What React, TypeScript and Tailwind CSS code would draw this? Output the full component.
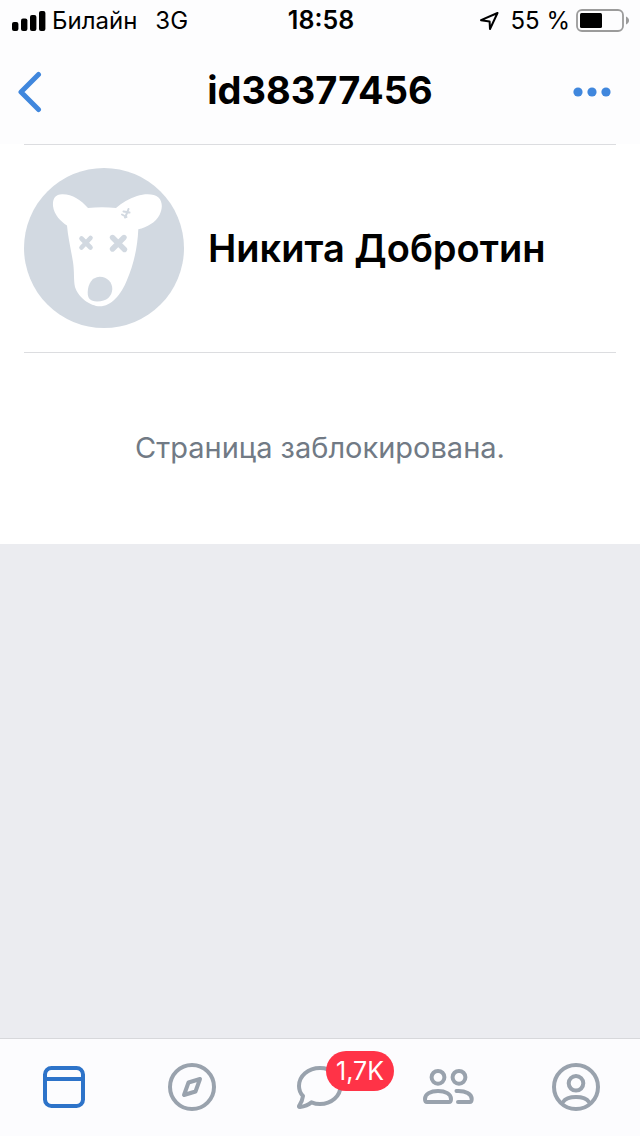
import React from 'react';

const SignalIcon = () => (
  <svg width="34" height="20" viewBox="0 0 34 20" fill="currentColor" aria-hidden="true">
    <rect x="0" y="11" width="6.4" height="9" rx="2" />
    <rect x="9" y="7.5" width="6.4" height="12.5" rx="2" />
    <rect x="18" y="4" width="6.4" height="16" rx="2" />
    <rect x="27" y="0" width="6.4" height="20" rx="2" />
  </svg>
);

const LocationIcon = () => (
  <svg width="20" height="20" viewBox="0 0 20 20" fill="none" stroke="currentColor" strokeWidth="2" strokeLinejoin="round" aria-hidden="true">
    <path d="M18.5 2 2 9.2l8.600 1.200.4 7.600z" />
  </svg>
);

const BatteryIcon = () => (
  <svg width="54" height="24" viewBox="0 0 54 24" aria-hidden="true">
    <rect x="1" y="1" width="46" height="21" rx="5" fill="none" stroke="#9b9b9b" strokeWidth="1.8" />
    <rect x="4" y="4" width="22" height="15" rx="1.5" fill="#000" />
    <path d="M50 7.5c2 1 3 2.300 3 4s-1 3-3 4z" fill="#9b9b9b" />
  </svg>
);

// Собака с крестиками вместо глаз
const DeletedAvatar = () => (
  <svg className="shrink-0" width="160" height="160" viewBox="0 0 160 160" role="img" aria-label="Аватар">
    <circle cx="80" cy="80" r="80" fill="#d2d9e1" />
    <path
      d="M64 40C57 32 48 26 38 26.300C31 26.500 28.500 31 29 38C30 47 37 53.500 43 57.500C44 69 47 82 49 94C50.500 104 49.500 112 51 119C54 129 66 138.300 76 138.300C87 138.300 97 127 103 112C109 98 113.500 81 114.300 61.300C123 59.500 132 54 135.500 47C138.500 41 139 34 134.500 29.500C130 25.500 121 25.500 113 28C105 30.500 98 35 92 40C83 39 73 39 64 40Z"
      fill="#fff"
    />
    <path d="M75.500 108.700C83 108.500 88.500 114.500 88.300 121C88 128 83 133.500 73 133.500C66 133.500 63.500 130 63.700 124C64 116 68 109 75.500 108.700Z" fill="#d2d9e1" />
    <g fill="none" stroke="#d2d9e1" strokeLinecap="round">
      <path d="M57.500 70.500 66.500 79.500M66.500 70 57.500 79.500" strokeWidth="4.600" />
      <path d="M88.500 69.500 100.500 81.500M100 69.500 88.500 81" strokeWidth="5.400" />
      <path d="M104.500 41 103 45 101 49.500M99.500 43.500 105.500 44.500M98 46.500 102.500 49" strokeWidth="2" />
    </g>
  </svg>
);

const FeedIcon = () => (
  <svg width="56" height="56" viewBox="0 0 56 56" fill="none" stroke="currentColor" strokeWidth="4" aria-hidden="true">
    <rect x="9" y="9" width="38" height="38" rx="6.500" />
    <path d="M9 20H47" />
  </svg>
);

const CompassIcon = () => (
  <svg width="56" height="56" viewBox="0 0 56 56" fill="none" stroke="currentColor" strokeWidth="4" strokeLinejoin="round" aria-hidden="true">
    <circle cx="28" cy="28" r="22" />
    <path d="M36 20 24.500 23.500 20 36 31.500 32.500Z" />
  </svg>
);

const ChatIcon = () => (
  <svg width="56" height="56" viewBox="0 0 56 56" fill="none" stroke="currentColor" strokeWidth="4" strokeLinejoin="round" aria-hidden="true">
    <path d="M28 9C16 9 7 17 7 27C7 31 8.500 34.500 11 37C10.500 41 9 44 7.300 46.500C6.500 47.500 7 48 8 48C13 47.500 16.500 46 19.500 43.300C22 44.300 25 45 28 45C39.500 45 48.500 37 48.500 27C48.500 17 39.500 9 28 9Z" />
  </svg>
);

const FriendsIcon = () => (
  <svg width="56" height="56" viewBox="0 0 56 56" fill="none" stroke="currentColor" strokeWidth="4" strokeLinecap="round" strokeLinejoin="round" aria-hidden="true">
    <circle cx="18" cy="18.300" r="6.400" />
    <circle cx="39" cy="18.300" r="6.400" />
    <path d="M5 40C5 35 10.500 32 18 32S31 35 31 40C31 42.300 30.500 43 29 43H7C5.500 43 5 42.300 5 40Z" />
    <path d="M36.500 32C46 31.500 51.700 35 51.700 40C51.700 42.300 51.200 43 49.700 43H38" />
  </svg>
);

const ProfileIcon = () => (
  <svg width="56" height="56" viewBox="0 0 56 56" fill="none" stroke="currentColor" strokeWidth="4" strokeLinecap="round" aria-hidden="true">
    <circle cx="28" cy="28" r="22" />
    <circle cx="28" cy="24.300" r="7.300" />
    <path d="M15 43C17 40 22 38 28 38S39 40 41 43" />
  </svg>
);

const tabs = [
  { label: 'Новости', icon: FeedIcon, active: true },
  { label: 'Обзор', icon: CompassIcon },
  { label: 'Сообщения', icon: ChatIcon, badge: '1,7K' },
  { label: 'Друзья', icon: FriendsIcon },
  { label: 'Профиль', icon: ProfileIcon },
];

const StatusBar: React.FC = () => (
  <div className="grid grid-cols-[1fr_auto_1fr] items-center h-10 pt-0.5 pl-3 pr-2.5 text-2xl">
    <div className="flex items-center gap-1.5">
      <SignalIcon />
      <span>Билайн</span>
      <span className="ml-3">3G</span>
    </div>
    <span className="text-[25px] font-semibold">18:58</span>
    <div className="flex items-center justify-end">
      <LocationIcon />
      <span className="ml-3 mr-1.5">55 %</span>
      <BatteryIcon />
    </div>
  </div>
);

const App: React.FC = () => {
  return (
    <div className="flex flex-col min-h-screen bg-[#ebecf0] text-black font-['Inter','Noto_Sans',sans-serif]">
      <header className="bg-[#fdfdfe]">
        <StatusBar />
        <div className="flex justify-between items-center h-26 px-4">
          <button className="flex items-center w-14 h-14 text-[#4087dd]" aria-label="Назад">
            <svg width="28" height="42" viewBox="0 0 28 42" fill="none" stroke="currentColor" strokeWidth="5" strokeLinecap="round" strokeLinejoin="round" aria-hidden="true">
              <path d="M22.500 3.500 5 21 22.500 38.500" />
            </svg>
          </button>
          <h1 className="pb-1 text-[38px] leading-12 font-bold">id38377456</h1>
          <button className="flex justify-end items-center pr-3 w-14 h-14 text-[#4087dd]" aria-label="Ещё">
            <svg className="shrink-0" width="40" height="10" viewBox="0 0 40 10" fill="currentColor" aria-hidden="true">
              <circle cx="6" cy="5" r="4.600" />
              <circle cx="20" cy="5" r="4.600" />
              <circle cx="34" cy="5" r="4.600" />
            </svg>
          </button>
        </div>
      </header>

      <main className="flex-1">
        <div className="px-6 bg-white">
          <section className="flex items-center gap-6 h-52 pb-px border-t border-[#dcdde0]">
            <DeletedAvatar />
            <h2 className="text-[38px] leading-12 font-semibold">Никита Добротин</h2>
          </section>
          <p className="pt-[71px] pb-18 text-[29px] leading-12 text-center text-[#717a85] border-t border-[#dcdde0]">
            Страница заблокирована.
          </p>
        </div>
      </main>

      <nav className="flex bg-[#fcfcfe] border-t border-[#d7d8db]">
        {tabs.map(({ label, icon: Icon, active, badge }) => (
          <button
            key={label}
            aria-label={label}
            className={`flex flex-1 justify-center items-center h-[97px] pb-px ${active ? 'text-[#2d73c9]' : 'text-[#99a2ad]'}`}
          >
            <span className="relative">
              <Icon />
              {badge && (
                <span className="absolute -top-2 left-[34px] px-[10px] h-10 rounded-full bg-[#ff3347] text-white text-[25px] leading-10">
                  {badge}
                </span>
              )}
            </span>
          </button>
        ))}
      </nav>
    </div>
  );
};

export default App;
